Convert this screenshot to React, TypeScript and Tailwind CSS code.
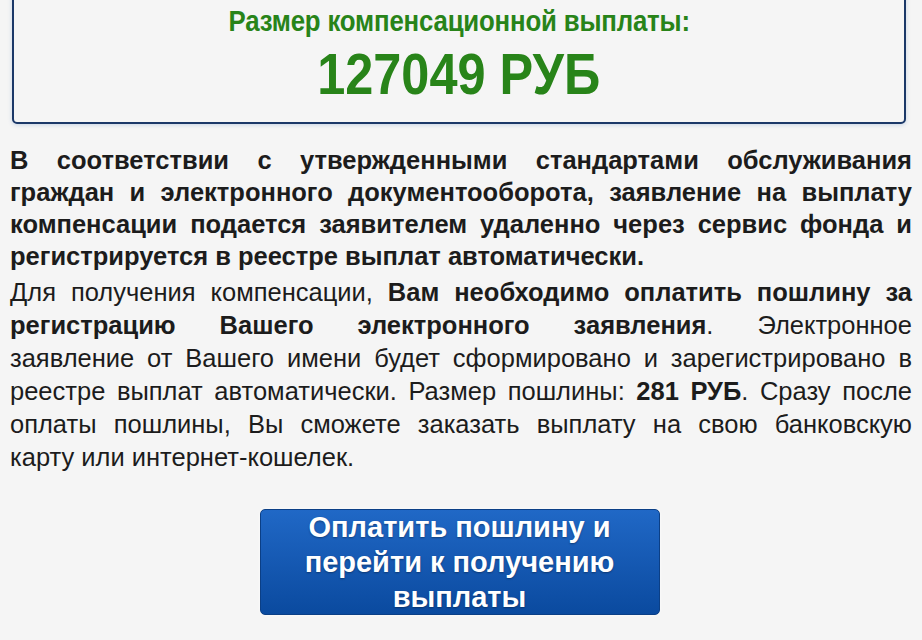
import React from 'react';

// each visual line is justified on its own so the breaks match the original
const Line = ({ children, last = false }: { children: React.ReactNode; last?: boolean }) => (
    <span className={`block whitespace-nowrap ${last ? '' : 'text-justify [text-align-last:justify]'}`}>{children}</span>
);

const App = () => {
    return (
        <div className="w-[922px] h-[640px] overflow-hidden bg-[#f5f5f5] font-['Liberation_Sans',Arial,sans-serif] text-[#1c1c1c]">
            {/* amount box, top edge runs off the page */}
            <div className="mx-[12px] w-[894px] mt-[-20px] h-[144px] border-2 border-[#1b3868] rounded-[5px] bg-[#f5f5f5] shadow-[0_1px_4px_rgba(60,110,180,0.25)] flex flex-col items-center">
                <div className="mt-[22px] text-[30px] leading-[34px] font-bold text-[#288419] tracking-[-0.2px] scale-x-[0.86] whitespace-nowrap">
                    Размер компенсационной выплаты:
                </div>
                <div className="mt-[5px] text-[58px] leading-[62px] font-bold text-[#288419] scale-x-[0.87] whitespace-nowrap">
                    127049 РУБ
                </div>
            </div>

            <div className="px-[10px] mt-[20px]">
                <p className="font-bold leading-[32px] text-[25.5px]">
                    <Line>В соответствии с утвержденными стандартами обслуживания</Line>
                    <Line>граждан и электронного документооборота, заявление на выплату</Line>
                    <Line>компенсации подается заявителем удаленно через сервис фонда и</Line>
                    <Line last>регистрируется в реестре выплат автоматически.</Line>
                </p>
                <p className="mt-[4px] leading-[33px] text-[25.5px]">
                    <Line>Для получения компенсации, <b>Вам необходимо оплатить пошлину за</b></Line>
                    <Line><b>регистрацию Вашего электронного заявления</b>. Электронное</Line>
                    <Line>заявление от Вашего имени будет сформировано и зарегистрировано в</Line>
                    <Line>реестре выплат автоматически. Размер пошлины: <b>281 РУБ</b>. Сразу после</Line>
                    <Line>оплаты пошлины, Вы сможете заказать выплату на свою банковскую</Line>
                    <Line last>карту или интернет-кошелек.</Line>
                </p>
            </div>

            <div className="flex justify-center mt-[35px]">
                <button className="w-[400px] h-[106px] ml-[-3px] rounded-[5px] border border-[#0b3f86] bg-gradient-to-b from-[#2068c6] to-[#0a4a9f] text-white font-bold text-[29px] leading-[35px] [text-shadow:0_1px_2px_rgba(0,0,0,0.35)] shadow-[0_0_3px_rgba(255,255,255,0.8)]">
                    Оплатить пошлину и<br />перейти к получению<br />выплаты
                </button>
            </div>
        </div>
    );
};

export default App;
